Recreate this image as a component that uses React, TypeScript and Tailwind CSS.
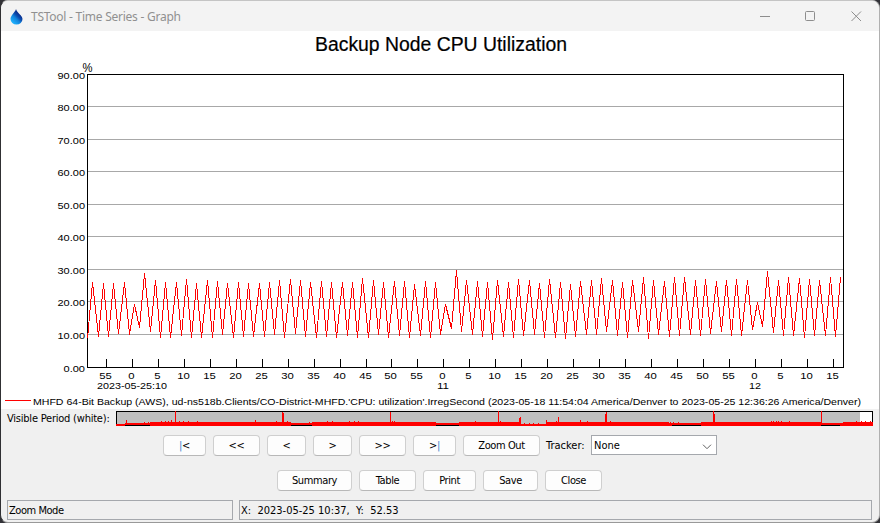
import type { ReactNode } from "react";

const series =
  "87,338 92,282 98,336 103,283 108,336 113,283 118,333 124,282 129,334 134,304 139,327 144,273 150,331 155,280 160,337 165,282 170,337 176,282 181,335 186,279 191,337 196,283 201,337 207,280 212,337 217,281 222,334 227,283 233,337 238,282 243,336 248,283 253,336 259,283 264,336 269,282 274,334 279,280 284,337 290,279 295,333 300,280 305,336 310,282 316,337 321,281 326,336 331,282 336,337 342,282 347,335 352,282 357,337 362,278 368,337 373,280 378,334 383,282 388,337 394,281 399,335 404,281 409,337 414,284 420,335 425,281 430,337 435,282 440,334 445,304 451,328 456,270 461,331 466,280 472,334 477,281 482,336 487,282 492,339 497,280 503,336 508,282 513,337 518,279 523,335 529,280 534,334 539,283 544,337 549,279 555,337 560,282 565,338 570,284 575,336 580,281 586,334 591,280 596,334 601,278 606,331 612,280 617,335 622,282 627,337 632,280 638,331 643,277 648,338 653,280 658,334 664,281 669,336 674,277 679,335 684,277 690,334 695,280 700,335 705,279 710,333 716,281 721,331 726,280 731,335 736,279 741,335 747,280 752,329 757,302 762,326 767,271 773,332 778,280 783,335 788,277 793,335 799,278 804,337 809,279 814,335 819,280 825,335 830,277 835,336 840,277";

const gridLines: [string, number][] = [
  ["90.00", 74], ["80.00", 106], ["70.00", 139], ["60.00", 171], ["50.00", 204],
  ["40.00", 236], ["30.00", 269], ["20.00", 301], ["10.00", 334], ["0.00", 367],
];

const ticks = [
  106, 132, 158, 184, 210, 236, 262, 288, 314, 340, 366, 391, 417, 443, 469,
  495, 521, 547, 573, 599, 625, 651, 677, 703, 729, 755, 781, 807, 833,
];

// Overview baseline: [x, width, top, height]
const base: number[][] = [
  [116, 9, 424, 2], [125, 25, 423, 2], [150, 141, 422, 4], [291, 21, 423, 2],
  [312, 124, 422, 4], [436, 23, 423, 2], [459, 61, 422, 4], [520, 26, 424, 2],
  [546, 122, 422, 4], [668, 4, 423, 3], [672, 29, 423, 2], [701, 120, 422, 4],
  [821, 19, 423, 2], [840, 3, 423, 3], [843, 30, 422, 4],
];

// Overview spikes: [x, top, width]
const spikes: number[][] = [
  [126, 420, 1], [144, 422, 1], [148, 422, 1], [161, 421, 1], [165, 421, 1],
  [168, 421, 1], [171, 420, 1], [175, 411, 1], [179, 421, 1], [183, 421, 1],
  [188, 421, 1], [197, 421, 1], [255, 420, 1], [276, 421, 1], [282, 412, 1],
  [283, 413, 1], [287, 421, 1], [309, 422, 1], [327, 421, 1], [332, 421, 1],
  [349, 421, 1], [354, 421, 1], [358, 421, 1], [390, 412, 1], [392, 421, 1],
  [394, 421, 1], [475, 421, 1], [498, 411, 1], [500, 421, 1], [519, 418, 1],
  [520, 417, 1], [524, 423, 1], [529, 423, 1], [533, 423, 1], [538, 423, 1],
  [546, 420, 1], [558, 417, 1], [556, 421, 1], [580, 420, 1], [587, 421, 1],
  [605, 414, 1], [606, 412, 1], [610, 421, 1], [668, 422, 1], [670, 422, 1],
  [673, 422, 1], [678, 422, 1], [705, 422, 1], [713, 411, 1], [714, 414, 1],
  [771, 421, 1], [773, 421, 1], [776, 421, 1], [778, 421, 1], [781, 421, 1],
  [789, 421, 1], [821, 411, 1], [856, 421, 1], [861, 421, 1], [865, 421, 1],
  [870, 421, 1],
];

function Button({ width, children }: { width: string; children: ReactNode }) {
  return (
    <button className={`${width} flex h-[21px] items-center justify-center rounded-[4px] border border-b-[#b8b8b8] border-[#cfcfcf] bg-[#fdfdfd] leading-none tracking-[-0.4px] whitespace-nowrap`}>
      {children}
    </button>
  );
}

function TitleBar() {
  return (
    <header className="flex h-[29px] items-center bg-[#f3f3f3]">
      <svg className="ml-[9px]" width="13" height="16" viewBox="0 0 13 16">
        <defs>
          <linearGradient id="drop" x1="0.9" y1="0.2" x2="0.3" y2="1">
            <stop offset="0" stopColor="#0a1470" />
            <stop offset="0.4" stopColor="#0c4cae" />
            <stop offset="0.6" stopColor="#1284dc" />
            <stop offset="1" stopColor="#20b4ff" />
          </linearGradient>
        </defs>
        <path d="M6 0C5.400 3 .5 6.500 .5 10a6 5.600 0 0 0 12 0C12.500 6.500 7 4 6 0Z" fill="url(#drop)" />
      </svg>
      <span className="ml-[8px] font-['Noto_Sans','Open_Sans',sans-serif] text-[12px] leading-none tracking-[-0.25px] whitespace-nowrap text-[#909090]">
        TSTool - Time Series - Graph
      </span>
      <svg className="mr-[17px] ml-auto" width="102" height="12" viewBox="0 0 102 12" fill="none" stroke="#8d8d8d">
        <path d="M0 5.500h10" />
        <rect x="45.500" y=".5" width="9" height="9" rx="1" />
        <path d="M91.500 .5l9.500 9.500M101 .5L91.500 10" />
      </svg>
    </header>
  );
}

function Graph() {
  return (
    <svg className="block h-[378px] w-[878px]" viewBox="1 31 878 378" fontFamily="'Liberation Sans', Arial, sans-serif" fontSize="9.800">
      <rect x="1" y="31" width="878" height="378" fill="#fff" />
      <text x="315" y="50.700" fontSize="19.500" textLength="252" lengthAdjust="spacingAndGlyphs" stroke="#000" strokeWidth=".2">Backup Node CPU Utilization</text>
      <text x="82.500" y="72" fontSize="12.500" textLength="10" lengthAdjust="spacingAndGlyphs">%</text>
      <g shapeRendering="crispEdges">
        {gridLines.slice(1, -1).map(([label, y]) => (
          <rect key={label} x="88" y={y} width="755" height="1" fill="#a8a8a8" />
        ))}
        {ticks.map((x) => (
          <rect key={x} x={x} y="359" width="1" height="8" />
        ))}
        <rect x="87.500" y="74.500" width="756" height="293" fill="none" stroke="#000" />
        <polyline points={series} transform="translate(.5 .5)" fill="none" stroke="#f00" />
        <rect x="5" y="400" width="26" height="1" fill="#f00" />
      </g>
      {gridLines.map(([label, y]) => (
        <text key={label} x={label.length === 5 ? 57.5 : 63.5} y={y + 5} textLength={label.length === 5 ? 27.500 : 21.500} lengthAdjust="spacingAndGlyphs">{label}</text>
      ))}
      {ticks.map((x, i) => {
        const label = String(((i + 11) % 12) * 5);
        const w = label.length * 6.3;
        return (
          <text key={x} x={x - 0.5 - w / 2} y="379" textLength={w} lengthAdjust="spacingAndGlyphs">{label}</text>
        );
      })}
      <text x="97" y="389" textLength="70" lengthAdjust="spacingAndGlyphs">2023-05-25:10</text>
      <text x="437" y="389" textLength="12" lengthAdjust="spacingAndGlyphs">11</text>
      <text x="749" y="389" textLength="12" lengthAdjust="spacingAndGlyphs">12</text>
      <text x="33" y="405" textLength="828" lengthAdjust="spacingAndGlyphs">
        MHFD 64-Bit Backup (AWS), ud-ns518b.Clients/CO-District-MHFD.'CPU: utilization'.IrregSecond (2023-05-18 11:54:04 America/Denver to 2023-05-25 12:36:26 America/Denver)
      </text>
    </svg>
  );
}

function Overview() {
  return (
    <svg className="block h-[15px] w-[757px]" viewBox="116 411 757 15" shapeRendering="crispEdges">
      <rect x="116" y="411" width="757" height="15" />
      <rect x="117" y="412" width="743" height="13" fill="#c0c0c0" />
      <rect x="860" y="412" width="12" height="13" fill="#fff" />
      {base.map(([x, w, y, h]) => (
        <rect key={x} x={x} y={y} width={w} height={h} fill="#f00" />
      ))}
      {spikes.map(([x, y, w]) => (
        <rect key={x} x={x} y={y} width={w} height={425 - y} fill="#f00" />
      ))}
    </svg>
  );
}

export default function App() {
  return (
    <div className="h-[523px] w-[880px] bg-[#333338] font-['DejaVu_Sans_Condensed','DejaVu_Sans',sans-serif] text-[11px] text-black">
      <div className="flex h-[523px] w-[880px] flex-col overflow-hidden rounded-[8px] border border-t-[#c4c4c4] border-r-[#b0b0b0] border-b-[#999999] border-l-[#303033] bg-[#f0f0f0]">
        <div className="h-px bg-[#f3f3f3]" />
        <TitleBar />
        <Graph />
        <div className="mt-[2px] flex h-[15px] items-center">
          <span className="w-[115px] pl-[6px] leading-none tracking-[-0.22px] whitespace-nowrap">Visible Period (white):</span>
          <Overview />
        </div>
        <div className="mt-[9px] ml-[162px] flex h-[21px] items-center gap-[7px]">
          <Button width="w-[43px]"><span className="text-[#2f86cc]">|</span>&lt;</Button>
          <Button width="w-[47px]">&lt;&lt;</Button>
          <Button width="w-[39px]">&lt;</Button>
          <Button width="w-[39px]">&gt;</Button>
          <Button width="w-[47px]">&gt;&gt;</Button>
          <Button width="w-[43px]">&gt;<span className="text-[#2f86cc]">|</span></Button>
          <Button width="w-[77px]">Zoom Out</Button>
          <span className="-ml-px w-[38px] leading-none whitespace-nowrap">Tracker:</span>
          <div className="flex h-[20px] w-[126px] items-center justify-between self-start border border-[#a5a8ad] bg-white pr-[4px] pl-[2px] leading-none">
            None
            <svg className="mt-[3px]" width="10" height="6" viewBox="0 0 10 6" fill="none" stroke="#606060">
              <path d="M1 .7l4 4 4-4" />
            </svg>
          </div>
        </div>
        <div className="mt-[14px] ml-[276px] flex h-[21px] gap-[7px]">
          <Button width="w-[75px]">Summary</Button>
          <Button width="w-[57px]">Table</Button>
          <Button width="w-[53px]">Print</Button>
          <Button width="w-[55px]">Save</Button>
          <Button width="w-[57px]">Close</Button>
        </div>
        <div className="mt-[9px] ml-[6px] flex h-[20px] gap-[6px] leading-none">
          <div className="flex w-[226px] items-center border border-[#a5a8ad] pl-[1px] tracking-[-0.45px]">Zoom Mode</div>
          <div className="flex w-[633px] items-center border border-[#a5a8ad] pl-[1px] whitespace-pre">X:  2023-05-25 10:37,  Y:  52.53</div>
        </div>
      </div>
    </div>
  );
}
